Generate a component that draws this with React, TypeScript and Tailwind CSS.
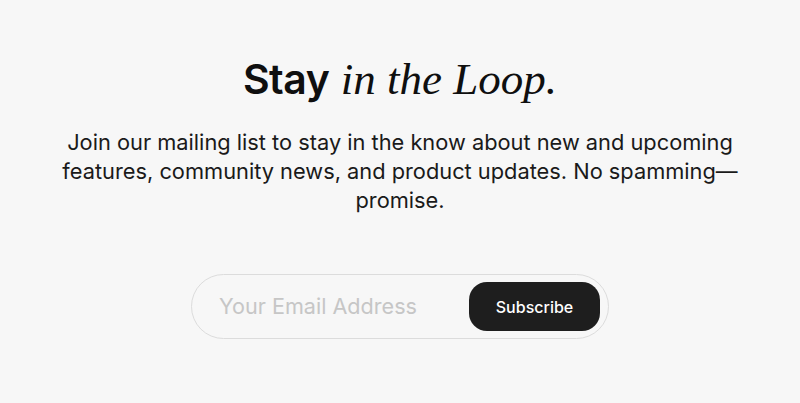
export default function App() {
  return (
    <div className="min-h-[403px] w-full bg-[#f7f7f7] flex flex-col items-center pt-[53px] font-['Inter',sans-serif] text-[#111]">
      <h2 className="text-[41px] leading-[52px] text-[#0f0f0f] whitespace-nowrap">
        <span className="font-semibold tracking-[-0.5px]">Stay</span>{" "}
        <span className="italic font-['Liberation_Serif',serif] text-[45px]">in the Loop.</span>
      </h2>
      <p className="mt-[23px] w-[700px] text-center text-[21.8px] leading-[29px] text-[#1a1a1a]">
        Join our mailing list to stay in the know about new and upcoming features, community news, and product updates. No spamming—promise.
      </p>
      <form
        className="mt-[59px] flex items-center w-[418px] h-[65px] rounded-full border border-[#dcdcdc] bg-[#f7f7f7] pl-[27px] pr-[8px]"
        onSubmit={(e) => e.preventDefault()}
      >
        <input
          type="email"
          placeholder="Your Email Address"
          className="flex-1 min-w-0 bg-transparent outline-none text-[21.6px] placeholder:text-[#c6c6c6] text-[#222]"
        />
        <button
          type="submit"
          className="w-[131px] h-[49px] rounded-[18px] bg-[#1e1e1e] text-white text-[16px] font-medium"
        >
          Subscribe
        </button>
      </form>
    </div>
  )
}
